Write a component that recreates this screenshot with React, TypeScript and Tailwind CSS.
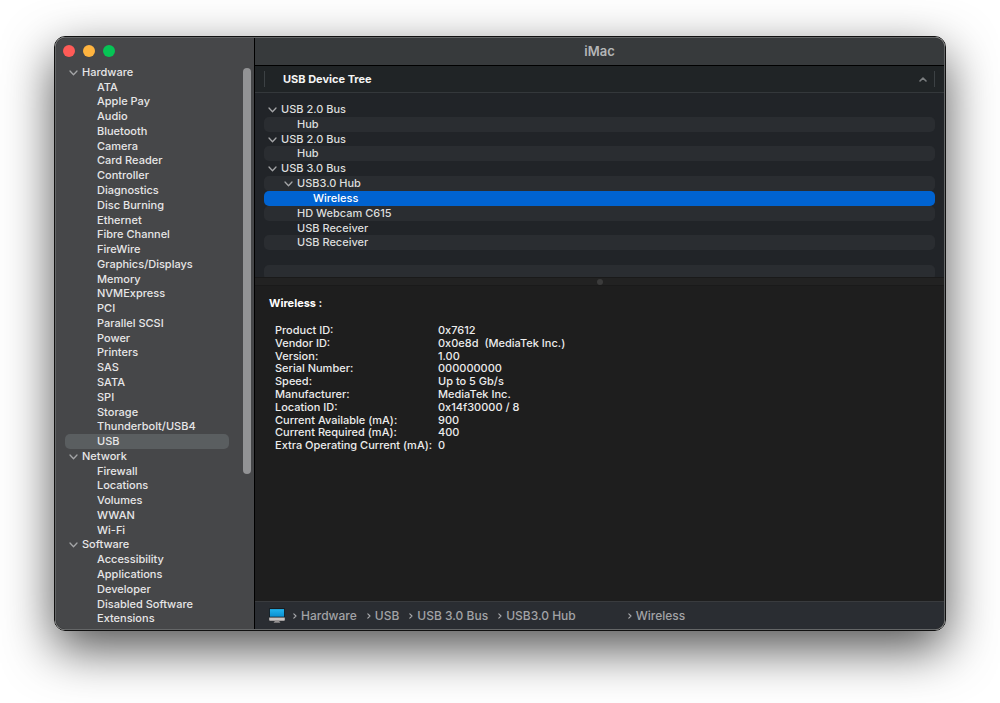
import { ReactNode } from "react";

type Section = { title: string; items: string[] };

const sections: Section[] = [
  {
    title: "Hardware",
    items: [
      "ATA", "Apple Pay", "Audio", "Bluetooth", "Camera", "Card Reader", "Controller",
      "Diagnostics", "Disc Burning", "Ethernet", "Fibre Channel", "FireWire",
      "Graphics/Displays", "Memory", "NVMExpress", "PCI", "Parallel SCSI", "Power",
      "Printers", "SAS", "SATA", "SPI", "Storage", "Thunderbolt/USB4", "USB",
    ],
  },
  { title: "Network", items: ["Firewall", "Locations", "Volumes", "WWAN", "Wi-Fi"] },
  {
    title: "Software",
    items: ["Accessibility", "Applications", "Developer", "Disabled Software", "Extensions", "Fonts"],
  },
];

type TreeRow = { label: string; depth: 0 | 1 | 2; open?: boolean };

const tree: TreeRow[] = [
  { label: "USB 2.0 Bus", depth: 0, open: true },
  { label: "Hub", depth: 1 },
  { label: "USB 2.0 Bus", depth: 0, open: true },
  { label: "Hub", depth: 1 },
  { label: "USB 3.0 Bus", depth: 0, open: true },
  { label: "USB3.0 Hub", depth: 1, open: true },
  { label: "Wireless", depth: 2 },
  { label: "HD Webcam C615", depth: 1 },
  { label: "USB Receiver", depth: 1 },
  { label: "USB Receiver", depth: 1 },
  { label: "", depth: 0 },
  { label: "", depth: 0 },
];

const details: [string, string][] = [
  ["Product ID:", "0x7612"],
  ["Vendor ID:", "0x0e8d  (MediaTek Inc.)"],
  ["Version:", "1.00"],
  ["Serial Number:", "000000000"],
  ["Speed:", "Up to 5 Gb/s"],
  ["Manufacturer:", "MediaTek Inc."],
  ["Location ID:", "0x14f30000 / 8"],
  ["Current Available (mA):", "900"],
  ["Current Required (mA):", "400"],
  ["Extra Operating Current (mA):", "0"],
];

const indent = { 0: "pl-1", 1: "pl-5", 2: "pl-9" };

function Disclosure() {
  return (
    <svg viewBox="0 0 9 6" className="mt-px h-[6px] w-[9px] shrink-0" fill="none" stroke="#a4a5a7" strokeWidth="1.3" strokeLinecap="round" strokeLinejoin="round" aria-hidden="true">
      <path d="M1 1l3.5 3.7L8 1" />
    </svg>
  );
}

function Separator() {
  return (
    <svg viewBox="0 0 4 6" className="mt-px h-[6px] w-[4px] shrink-0" fill="none" stroke="#a9aaad" strokeWidth="1.1" strokeLinecap="round" strokeLinejoin="round" aria-hidden="true">
      <path d="M0.8 0.8L3 3L0.8 5.2" />
    </svg>
  );
}

function ComputerIcon() {
  return (
    <svg viewBox="0 0 16 15" className="h-[15px] w-[16px] shrink-0" aria-hidden="true">
      <defs>
        <linearGradient id="screen" x1="0" y1="0" x2="0" y2="1">
          <stop offset="0" stopColor="#22b4ee" />
          <stop offset="1" stopColor="#0a8fd0" />
        </linearGradient>
      </defs>
      <rect x="0" y="0.2" width="16" height="10" rx="0.8" fill="#15171a" />
      <rect x="0.9" y="1.1" width="14.2" height="7.6" fill="url(#screen)" />
      <path d="M0.2 9.6h15.6v2.4a.8.8 0 0 1-.8.8H1a.8.8 0 0 1-.8-.8z" fill="#c9c4c2" />
      <path d="M6 12.8h4l.3 1.1h-4.6z" fill="#85817f" />
      <rect x="4.8" y="13.7" width="6.4" height="0.9" rx="0.3" fill="#c4c0be" />
    </svg>
  );
}

function Crumb({ children }: { children: ReactNode }) {
  return (
    <li className="flex items-center gap-1">
      <Separator />
      <a href="#">{children}</a>
    </li>
  );
}

function Sidebar() {
  return (
    <aside className="flex w-[199px] shrink-0 flex-col border-r border-black bg-[#464749]">
      <div className="flex h-[26px] shrink-0 items-center gap-2 pl-[7px]">
        <button aria-label="Close" className="size-3 rounded-full bg-[#ff5b57]" />
        <button aria-label="Minimize" className="size-3 rounded-full bg-[#ffb43f]" />
        <button aria-label="Zoom" className="size-3 rounded-full bg-[#06c455]" />
      </div>
      <div className="flex min-h-0 flex-1 gap-[14px] overflow-hidden pt-px pl-[9px]">
        <nav aria-label="Categories" className="grid h-[576px] flex-1 auto-rows-fr text-[#e6e6e7]">
          {sections.map((section) => [
            <button key={section.title} className="flex items-center gap-1 pl-1 text-left">
              <Disclosure />
              {section.title}
            </button>,
            ...section.items.map((item) => (
              <button
                key={item}
                className={
                  item === "USB"
                    ? "rounded-[5px] bg-[#5a5e60] pl-8 text-left"
                    : "pl-8 text-left"
                }
              >
                {item}
              </button>
            )),
          ])}
        </nav>
        <div className="mt-[3px] mr-[3px] h-[406px] w-2 rounded-full bg-[#929395]" />
      </div>
    </aside>
  );
}

function DeviceTree() {
  return (
    <section className="flex h-[211px] shrink-0 flex-col overflow-hidden bg-[#212428]">
      <header className="flex h-[27px] shrink-0 items-center border-b border-[#34383b] bg-[#202426] px-[9px]">
        <button className="flex h-4 flex-1 items-center justify-between border-x border-[#3c4144] pr-[7px] pl-[18px] text-left font-bold text-[#f4f4f4]">
          USB Device Tree
          <svg viewBox="0 0 8 5" className="h-[5px] w-[8px]" fill="none" stroke="#7b7e80" strokeWidth="1.6" strokeLinecap="round" strokeLinejoin="round" aria-hidden="true">
            <path d="M1 4l3-3 3 3" />
          </svg>
        </button>
      </header>
      <div className="min-h-0 flex-1 overflow-hidden px-[9px] pt-[9px]">
        <div role="tree" aria-label="USB Device Tree" className="grid h-[178px] auto-rows-fr text-[#dcdddd]">
          {tree.map((row, i) => (
            <div
              key={i}
              role="treeitem"
              className={
                "flex items-center gap-1 rounded-[5px] " +
                indent[row.depth] +
                (row.label === "Wireless"
                  ? " bg-[#0063d1] text-white"
                  : i % 2
                    ? " bg-[#2a2d31]"
                    : "")
              }
            >
              <span className="flex w-[9px] justify-center">{row.open && <Disclosure />}</span>
              {row.label}
            </div>
          ))}
        </div>
      </div>
    </section>
  );
}

export default function App() {
  return (
    <div className="flex h-screen overflow-hidden bg-white px-[54px] pt-[36px] pb-[72px] font-['Inter','Liberation_Sans',sans-serif] text-[11px] leading-[13px] font-medium">
      <main className="flex min-w-0 flex-1 rounded-[11px] border border-[#111] shadow-[0_18px_50px_rgba(0,0,0,0.68)]">
        <div className="flex min-w-0 flex-1 overflow-hidden rounded-[10px] border border-[#646667] bg-[#1e1e1e]">
          <Sidebar />
          <div className="flex min-w-0 flex-1 flex-col">
            <h1 className="flex h-7 shrink-0 items-center justify-center border-b border-black bg-[#373a3c] text-[13px] font-semibold text-[#b4b6b7]">
              iMac
            </h1>
            <DeviceTree />
            <div className="flex h-[9px] shrink-0 items-center justify-center border-y border-[#1a1a1a] bg-[#222222]">
              <span className="size-[6px] rounded-full bg-[#3b3b3b]" />
            </div>
            <section className="min-h-0 flex-1 overflow-hidden bg-[#1e1e1e] px-[14px] pt-[11px] text-[#ececec]">
              <h2 className="font-bold text-white">Wireless :</h2>
              <dl className="mt-[14px] grid h-32 auto-rows-fr pl-[6px]">
                {details.map(([name, value]) => (
                  <div key={name} className="flex">
                    <dt className="w-[163px] shrink-0 whitespace-nowrap">{name}</dt>
                    <dd className="whitespace-pre">{value}</dd>
                  </div>
                ))}
              </dl>
            </section>
            <footer className="flex h-7 shrink-0 items-center gap-2 border-t border-[#393b3e] bg-[#2a2d32] pl-[14px] text-[12px] leading-4 text-[#a2a3a6]">
              <ComputerIcon />
              <nav aria-label="Path">
                <ol className="flex items-center gap-[10px]">
                  <Crumb>Hardware</Crumb>
                  <Crumb>USB</Crumb>
                  <Crumb>USB 3.0 Bus</Crumb>
                  <Crumb>USB3.0 Hub</Crumb>
                  <li className="w-8" aria-hidden="true" />
                  <Crumb>Wireless</Crumb>
                </ol>
              </nav>
            </footer>
          </div>
        </div>
      </main>
    </div>
  );
}
